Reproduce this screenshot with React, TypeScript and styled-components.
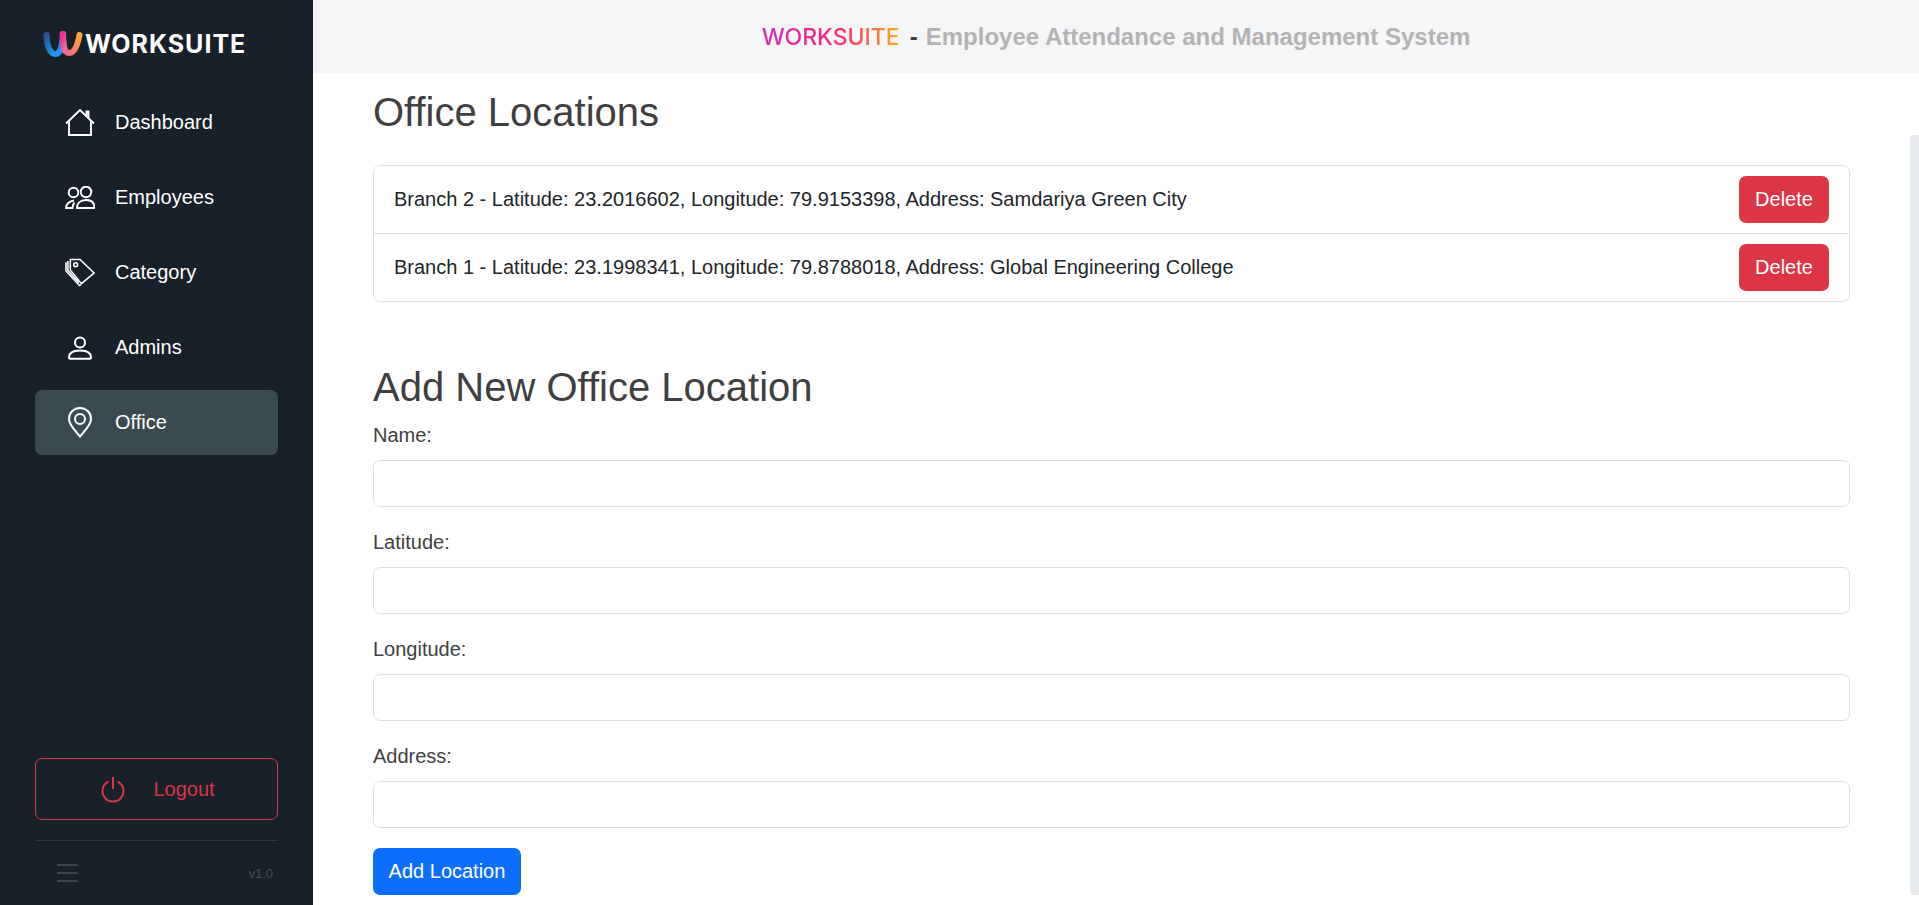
import styled, { createGlobalStyle } from "styled-components";

const GlobalStyle = createGlobalStyle`
  html, body {
    margin: 0;
    height: 100%;
    overflow: hidden;
    background: #fff;
    font-family: "Liberation Sans", Arial, sans-serif;
  }
  * {
    box-sizing: border-box;
  }
`;

const navItems = [
  { label: "Dashboard", icon: "house" },
  { label: "Employees", icon: "people" },
  { label: "Category", icon: "tags" },
  { label: "Admins", icon: "person" },
  { label: "Office", icon: "pin" },
];

const locations = [
  "Branch 2 - Latitude: 23.2016602, Longitude: 79.9153398, Address: Samdariya Green City",
  "Branch 1 - Latitude: 23.1998341, Longitude: 79.8788018, Address: Global Engineering College",
];

const fields = ["Name:", "Latitude:", "Longitude:", "Address:"];

const NavIcon = ({ name }: { name: string }) => {
  if (name === "house") {
    return (
      <svg width="30" height="27" viewBox="0 0 30 27" fill="none" stroke="#fff" strokeWidth="1.9">
        <path d="M1 14.5 15 1l14 13.5" />
        <path d="M4 12v14h22V12" />
        <path d="M21.5 7V2.5h2V9" />
      </svg>
    );
  }
  if (name === "people") {
    return (
      <svg width="30" height="23" viewBox="0 0 30 23" fill="none" stroke="#fff" strokeWidth="1.9">
        <circle cx="8.5" cy="6.5" r="4.8" />
        <circle cx="21" cy="6" r="5.3" />
        <path d="M12 22c0-4.5 3-8 9-8s8.500 3.500 8.500 8z" />
        <path d="M9 14.500C4.500 15 1 18 1 22h6.500c.2-2 .8-4 1.800-5.500" />
      </svg>
    );
  }
  if (name === "tags") {
    return (
      <svg width="31" height="29" viewBox="0 0 31 29" fill="none" stroke="#fff" strokeWidth="1.6">
        <path d="M5.500 1H15.500L30 15 17 26 5.500 12z" />
        <circle cx="11" cy="6.5" r="2" />
        <path d="M3 2.500V12.500L14.500 25" />
        <path d="M1 4v9L15 28l1.500-1" />
      </svg>
    );
  }
  if (name === "person") {
    return (
      <svg width="24" height="24" viewBox="0 0 24 24" fill="none" stroke="#fff" strokeWidth="2">
        <circle cx="12" cy="6.5" r="5" />
        <path d="M1 21.500c0-4.500 4-7 11-7s11 2.500 11 7c0 .8-.4 1.200-1.200 1.200H2.200c-.8 0-1.200-.4-1.200-1.200z" />
      </svg>
    );
  }
  return (
    <svg width="24" height="31" viewBox="0 0 24 31" fill="none" stroke="#fff" strokeWidth="2">
      <path d="M12 29.500C7 23.500 1 18 1 12 1 5.500 6 1 12 1s11 4.500 11 11c0 6-6 11.500-11 17.500z" />
      <circle cx="12" cy="12" r="5" />
    </svg>
  );
};

const LogoMark = () => (
  <svg width="40" height="27" viewBox="0 0 40 27" fill="none" strokeLinecap="round" strokeWidth="6">
    <defs>
      <linearGradient id="mark-blue" x1="0" y1="0" x2="0.6" y2="1">
        <stop offset="0" stopColor="#2b4f8c" />
        <stop offset="1" stopColor="#1e9bf2" />
      </linearGradient>
      <linearGradient id="mark-pink" x1="0" y1="0" x2="0.3" y2="1">
        <stop offset="0" stopColor="#f02a90" />
        <stop offset="1" stopColor="#f06a9a" />
      </linearGradient>
      <linearGradient id="mark-orange" x1="1" y1="0" x2="0" y2="1">
        <stop offset="0" stopColor="#fbac35" />
        <stop offset="1" stopColor="#f5608e" />
      </linearGradient>
    </defs>
    <path d="M3.500 5c0 9 3 19 9 19 5 0 7-9 7-20" stroke="url(#mark-blue)" />
    <path d="M20 4c0 9 1 19 6 19 6 0 9-10 10.500-18" stroke="url(#mark-orange)" />
    <path d="M20 4c0 7 .5 13 2 17" stroke="url(#mark-pink)" />
  </svg>
);

const App = () => {
  return (
    <>
      <GlobalStyle />
      <Layout>
        <Sidebar>
          <Brand>
            <LogoMark />
            <BrandName>WORKSUITE</BrandName>
          </Brand>
          <Nav>
            {navItems.map((item) => (
              <NavItem key={item.label} active={item.label === "Office"}>
                <IconSlot>
                  <NavIcon name={item.icon} />
                </IconSlot>
                {item.label}
              </NavItem>
            ))}
          </Nav>
          <SidebarFooter>
            <LogoutButton>
              <svg width="24" height="27" viewBox="0 0 24 27" fill="none" stroke="#dc3545" strokeWidth="2">
                <path d="M12 1v12" />
                <path d="M7.500 5.500a10.500 10.500 0 1 0 9 0" />
              </svg>
              Logout
            </LogoutButton>
            <FooterRow>
              <svg width="22" height="18" viewBox="0 0 22 18" fill="none" stroke="#4a4f55" strokeWidth="1.3">
                <path d="M0 1h21M0 9h21M0 17h21" />
              </svg>
              <Version>v1.0</Version>
            </FooterRow>
          </SidebarFooter>
        </Sidebar>
        <Main>
          <Header>
            <HeaderBrand>WORKSUITE</HeaderBrand>
            <HeaderDash>-</HeaderDash>
            <HeaderTitle>Employee Attendance and Management System</HeaderTitle>
          </Header>
          <Content>
            <PageTitle>Office Locations</PageTitle>
            <LocationList>
              {locations.map((text) => (
                <LocationRow key={text}>
                  {text}
                  <DeleteButton>Delete</DeleteButton>
                </LocationRow>
              ))}
            </LocationList>
            <FormTitle>Add New Office Location</FormTitle>
            {fields.map((field) => (
              <Field key={field}>
                <FieldLabel>{field}</FieldLabel>
                <Input />
              </Field>
            ))}
            <SubmitButton>Add Location</SubmitButton>
          </Content>
          <ScrollTrack />
        </Main>
      </Layout>
    </>
  );
};

const Layout = styled.div`
  display: flex;
  height: 905px;
  overflow: hidden;
`;

const Sidebar = styled.aside`
  width: 313px;
  flex: none;
  background: #18202a;
  display: flex;
  flex-direction: column;
  padding: 0 35px;
`;

const Brand = styled.div`
  display: flex;
  align-items: center;
  height: 87px;
  margin-left: 8px;
  gap: 2px;
`;

const BrandName = styled.span`
  color: #fff;
  font-family: "Inter", sans-serif;
  font-size: 25px;
  font-weight: 700;
  letter-spacing: 1px;
`;

const Nav = styled.nav`
  display: flex;
  flex-direction: column;
  gap: 10px;
  margin-top: 3px;
`;

const NavItem = styled.a.withConfig({
  shouldForwardProp: (prop) => prop !== "active",
})<{ active?: boolean }>`
  display: flex;
  align-items: center;
  height: 65px;
  padding-left: 30px;
  border-radius: 7px;
  color: #fff;
  font-size: 20px;
  background: ${({ active }) => (active ? "#3a4a51" : "transparent")};
`;

const IconSlot = styled.span`
  width: 30px;
  margin-right: 20px;
  display: flex;
  justify-content: center;
`;

const SidebarFooter = styled.div`
  margin-top: auto;
  display: flex;
  flex-direction: column;
`;

const LogoutButton = styled.button`
  height: 62px;
  padding-left: 9px;
  border: 1px solid #dc3545;
  border-radius: 7px;
  background: transparent;
  color: #dc3545;
  font: inherit;
  font-size: 20px;
  display: flex;
  align-items: center;
  justify-content: center;
  gap: 28px;
`;

const FooterRow = styled.div`
  border-top: 1px solid #33383e;
  margin-top: 20px;
  height: 65px;
  display: flex;
  align-items: center;
  justify-content: space-between;
  padding: 0 5px 0 22px;
`;

const Version = styled.span`
  color: #4a4f55;
  font-size: 13px;
`;

const Main = styled.main`
  flex: 1;
  min-width: 0;
  position: relative;
  display: flex;
  flex-direction: column;
`;

const Header = styled.header`
  height: 73px;
  flex: none;
  padding-top: 1px;
  background: #f5f6f8;
  display: flex;
  align-items: center;
  justify-content: center;
`;

const HeaderBrand = styled.span`
  font-family: "Inter", sans-serif;
  font-size: 23px;
  font-weight: 500;
  background: linear-gradient(90deg, #d92fb0 0%, #f0268a 40%, #ff3a5a 65%, #ffb020 100%);
  -webkit-background-clip: text;
  background-clip: text;
  color: transparent;
`;

const HeaderDash = styled.span`
  color: #3c3c3c;
  font-size: 24px;
  font-weight: 700;
  margin: 0 8px 0 10px;
`;

const HeaderTitle = styled.span`
  color: #b3b3b3;
  font-size: 24px;
  font-weight: 700;
`;

const Content = styled.div`
  padding: 15px 69px 0 60px;
  display: flex;
  flex-direction: column;
  color: #3f3f3f;
`;

const PageTitle = styled.h2`
  margin: 0 0 29px;
  font-size: 40px;
  font-weight: 400;
  line-height: 48px;
`;

const LocationList = styled.ul`
  list-style: none;
  margin: 0 0 61px;
  padding: 0;
  border: 1px solid #dfdfdf;
  border-radius: 7px;
`;

const LocationRow = styled.li`
  height: 67px;
  padding: 0 20px;
  display: flex;
  align-items: center;
  justify-content: space-between;
  color: #212529;
  font-size: 20px;
  & + & {
    height: 68px;
    border-top: 1px solid #dfdfdf;
  }
`;

const DeleteButton = styled.button`
  width: 90px;
  height: 47px;
  border: none;
  border-radius: 7px;
  background: #dc3545;
  color: #fff;
  font: inherit;
`;

const FormTitle = styled.h3`
  margin: 0 0 9px;
  font-size: 40px;
  font-weight: 400;
  line-height: 48px;
`;

const Field = styled.div`
  display: flex;
  flex-direction: column;
  margin-bottom: 20px;
`;

const FieldLabel = styled.label`
  font-size: 20px;
  line-height: 30px;
  margin-bottom: 10px;
`;

const Input = styled.input`
  height: 47px;
  border: 1px solid #dfdfdf;
  border-radius: 7px;
  background: #fff;
`;

const SubmitButton = styled.button`
  align-self: flex-start;
  width: 148px;
  height: 47px;
  border: none;
  border-radius: 7px;
  background: #0d6efd;
  color: #fff;
  font: inherit;
  font-size: 20px;
`;

const ScrollTrack = styled.div`
  position: absolute;
  top: 135px;
  right: 0;
  width: 9px;
  height: 760px;
  background: #e9ecef;
  border-radius: 4px 0 0 4px;
`;

export default App;
